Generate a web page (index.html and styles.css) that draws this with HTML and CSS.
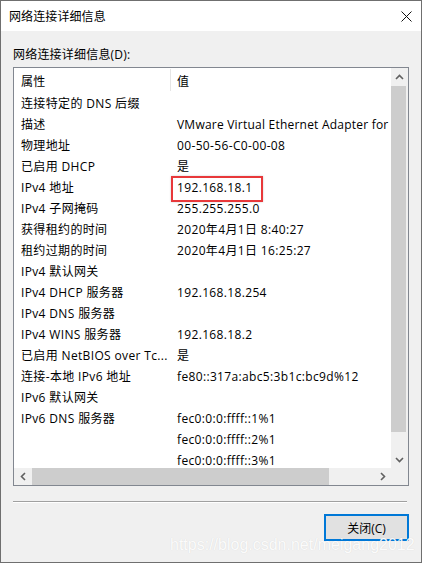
FILE: index.html
```html
<!DOCTYPE html>
<html lang="zh-CN">
<head>
<meta charset="utf-8">
<title>网络连接详细信息</title>
<link rel="stylesheet" href="styles.css">
</head>
<body>
<div class="window">
  <div class="titlebar">
    <span class="title">网络连接详细信息</span>
    <svg class="close" width="11" height="11" viewBox="0 0 11 11"><path d="M0.5 0.5 L10.5 10.5 M10.5 0.5 L0.5 10.5" stroke="#111" stroke-width="1" fill="none"/></svg>
  </div>
  <div class="content">
    <div class="label">网络连接详细信息(D):</div>
    <div class="listview">
      <div class="list-main">
        <div class="row header"><div class="c1">属性</div><div class="c2">值</div></div>
        <div class="row"><div class="c1">连接特定的 DNS 后缀</div><div class="c2"></div></div>
        <div class="row"><div class="c1">描述</div><div class="c2 tight">VMware Virtual Ethernet Adapter for</div></div>
        <div class="row"><div class="c1">物理地址</div><div class="c2">00-50-56-C0-00-08</div></div>
        <div class="row"><div class="c1">已启用 DHCP</div><div class="c2">是</div></div>
        <div class="row"><div class="c1">IPv4 地址</div><div class="c2 marked">192.168.18.1</div></div>
        <div class="row"><div class="c1">IPv4 子网掩码</div><div class="c2">255.255.255.0</div></div>
        <div class="row"><div class="c1">获得租约的时间</div><div class="c2">2020年4月1日 8:40:27</div></div>
        <div class="row"><div class="c1">租约过期的时间</div><div class="c2">2020年4月1日 16:25:27</div></div>
        <div class="row"><div class="c1">IPv4 默认网关</div><div class="c2"></div></div>
        <div class="row"><div class="c1">IPv4 DHCP 服务器</div><div class="c2">192.168.18.254</div></div>
        <div class="row"><div class="c1">IPv4 DNS 服务器</div><div class="c2"></div></div>
        <div class="row"><div class="c1">IPv4 WINS 服务器</div><div class="c2">192.168.18.2</div></div>
        <div class="row"><div class="c1">已启用 NetBIOS over Tc...</div><div class="c2">是</div></div>
        <div class="row"><div class="c1">连接-本地 IPv6 地址</div><div class="c2">fe80::317a:abc5:3b1c:bc9d%12</div></div>
        <div class="row"><div class="c1">IPv6 默认网关</div><div class="c2"></div></div>
        <div class="row"><div class="c1">IPv6 DNS 服务器</div><div class="c2">fec0:0:0:ffff::1%1</div></div>
        <div class="row"><div class="c1"></div><div class="c2">fec0:0:0:ffff::2%1</div></div>
        <div class="row"><div class="c1"></div><div class="c2">fec0:0:0:ffff::3%1</div></div>
      </div>
      <div class="vscroll">
        <div class="arrow"><svg width="9" height="6" viewBox="0 0 9 6"><path d="M1 5 L4.5 1.5 L8 5" stroke="#606060" stroke-width="1.6" fill="none"/></svg></div>
        <div class="vtrack"><div class="vthumb"></div></div>
        <div class="arrow"><svg width="9" height="6" viewBox="0 0 9 6"><path d="M1 1 L4.5 4.5 L8 1" stroke="#606060" stroke-width="1.6" fill="none"/></svg></div>
      </div>
      <div class="hscroll">
        <div class="arrow"><svg width="6" height="9" viewBox="0 0 6 9"><path d="M5 1 L1.5 4.5 L5 8" stroke="#606060" stroke-width="1.6" fill="none"/></svg></div>
        <div class="htrack"><div class="hthumb"></div></div>
        <div class="arrow"><svg width="6" height="9" viewBox="0 0 6 9"><path d="M1 1 L4.5 4.5 L1 8" stroke="#606060" stroke-width="1.6" fill="none"/></svg></div>
      </div>
      <div class="corner"></div>
    </div>
    <div class="separator"></div>
    <div class="buttons">
      <button class="btn">关闭(C)</button>
    </div>
  </div>
  <div class="watermark">https://blog.csdn.net/meigang2012</div>
</div>
</body>
</html>
```

FILE: styles.css
```css
* { box-sizing: border-box; }
html, body { margin: 0; padding: 0; }
body {
  font-family: "Open Sans", "Noto Sans CJK SC", sans-serif;
  font-size: 12px;
  color: #000;
  background: #f0f0f0;
}
.window {
  position: relative;
  width: 422px;
  height: 563px;
  border: 1px solid #6f6f6f;
  background: #f0f0f0;
  display: flex;
  flex-direction: column;
  overflow: hidden;
}
.titlebar {
  height: 30px;
  background: #fff;
  display: flex;
  align-items: center;
  justify-content: space-between;
  padding: 1px 9px 0 8px;
}
.title { line-height: 16px; letter-spacing: 0.1px; }
.close { display: block; margin-top: 0; }
.content {
  padding: 16px 12px 0 12px;
  display: flex;
  flex-direction: column;
}
.label {
  height: 16px;
  line-height: 16px;
  margin-bottom: 4px;
  letter-spacing: 0.2px;
}
.listview {
  height: 419px;
  border: 1px solid #828790;
  background: #fff;
  display: grid;
  grid-template-columns: 1fr 17px;
  grid-template-rows: 1fr 17px;
}
.list-main {
  overflow: hidden;
  min-width: 0;
}
.row {
  display: flex;
  height: 21px;
  line-height: 19px;
  padding-top: 2px;
  white-space: nowrap;
  letter-spacing: 0.35px;
}
.row.header {
  height: 24px;
  line-height: 22px;
  padding-top: 0;
}
.c1 {
  flex: 0 0 157px;
  padding-left: 7px;
  overflow: hidden;
}
.c2 {
  flex: 1 0 auto;
  padding-left: 6px;
  position: relative;
}
.c2.tight { letter-spacing: 0.22px; }
.header .c1 {
  border-right: 1px solid #e5e5e5;
  margin: 1px 0;
  padding-top: 2px;
}
.header .c2 { padding-top: 3px; }
.marked::after {
  content: "";
  position: absolute;
  left: 0;
  top: -2px;
  width: 88px;
  height: 22px;
  border: 2px solid #e8383a;
  box-shadow: 0 0 2px rgba(0,0,0,0.2);
}
.vscroll {
  background: #f0f0f0;
  display: flex;
  flex-direction: column;
}
.vscroll .arrow {
  height: 17px;
  display: flex;
  align-items: center;
  justify-content: center;
}
.vtrack { flex: 1; padding-top: 1px; }
.vthumb {
  height: 346px;
  margin: 0 2px 0 0;
  background: #cdcdcd;
}
.hscroll {
  background: #f0f0f0;
  display: flex;
}
.hscroll .arrow {
  width: 17px;
  display: flex;
  align-items: center;
  justify-content: center;
}
.htrack { flex: 1; padding-left: 1px; }
.hthumb {
  width: 297px;
  height: 17px;
  background: #cdcdcd;
}
.corner { background: #f0f0f0; }
.separator {
  margin-top: 15px;
  width: 394px;
  height: 2px;
  border-top: 1px solid #a0a0a0;
  border-bottom: 1px solid #fff;
}
.buttons {
  display: flex;
  justify-content: flex-end;
  margin-top: 11px;
}
.btn {
  width: 85px;
  height: 27px;
  border: 2px solid #0078d7;
  background: #e1e1e1;
  font-family: "Open Sans", "Noto Sans CJK SC", sans-serif;
  font-size: 12px;
  color: #000;
  padding: 1px 0 0 0;
}
.watermark {
  position: absolute;
  left: 169px;
  top: 535px;
  font-family: "Liberation Sans", Arial, sans-serif;
  font-size: 16px;
  color: rgba(255,255,255,0.92);
  text-shadow: 0 0 1px rgba(0,0,0,0.12);
  white-space: nowrap;
}
```
